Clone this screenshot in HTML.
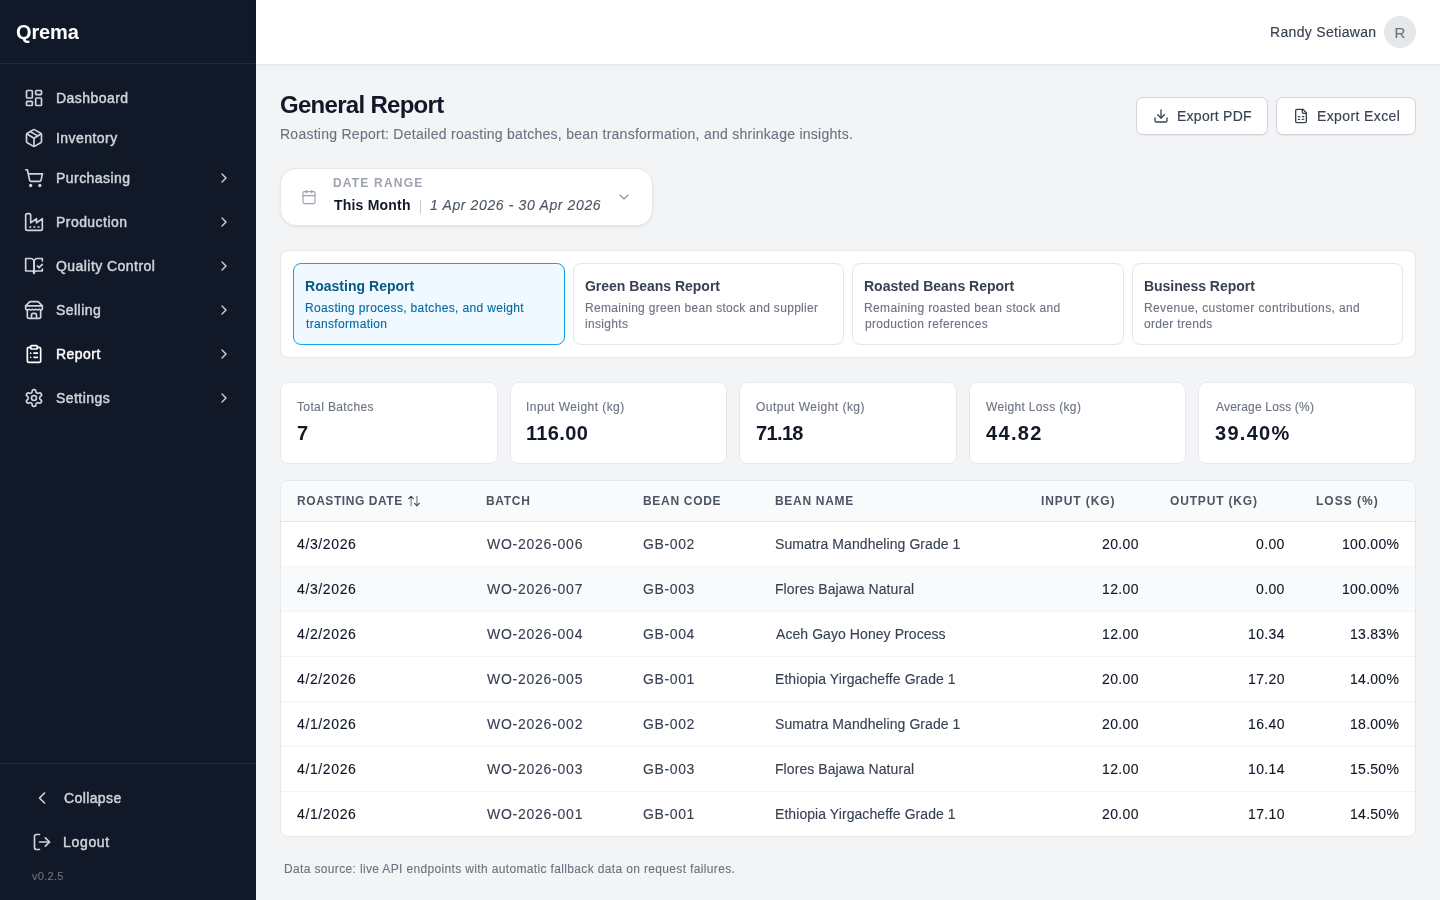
<!DOCTYPE html>
<html><head><meta charset="utf-8"><title>General Report</title>
<style>
*{box-sizing:border-box;margin:0;padding:0}
html,body{width:1440px;height:900px;overflow:hidden}
body{font-family:"Liberation Sans",sans-serif;background:#f3f4f6;position:relative;transform:translateZ(0)}
.box{position:absolute}
.t{position:absolute;white-space:nowrap;will-change:transform}
.i{position:absolute;overflow:visible}
</style></head><body>
<div class="box" style="left:0;top:0;width:256px;height:900px;background:#111827"></div>
<div class="box" style="left:0;top:63px;width:256px;height:1px;background:#1f2937"></div>
<div class="box" style="left:0;top:763px;width:256px;height:1px;background:#1f2937"></div>
<div class="t" style="top:17px;left:16px;font-size:20px;line-height:30px;color:#ffffff;font-weight:700;letter-spacing:-0.113px;">Qrema</div>
<svg class="i" style="left:24px;top:88px;width:20px;height:20px;color:#d1d5db;" viewBox="0 0 24 24" fill="none" stroke="currentColor" stroke-width="2" stroke-linecap="round" stroke-linejoin="round"><rect width="7" height="9" x="3" y="3" rx="1"/><rect width="7" height="5" x="14" y="3" rx="1"/><rect width="7" height="9" x="14" y="12" rx="1"/><rect width="7" height="5" x="3" y="16" rx="1"/></svg>
<div class="t" style="top:88px;left:56px;font-size:14px;line-height:21px;color:#d1d5db;letter-spacing:0.450px;-webkit-text-stroke:0.45px #d1d5db;">Dashboard</div>
<svg class="i" style="left:24px;top:128px;width:20px;height:20px;color:#d1d5db;" viewBox="0 0 24 24" fill="none" stroke="currentColor" stroke-width="2" stroke-linecap="round" stroke-linejoin="round"><path d="M11 21.73a2 2 0 0 0 2 0l7-4A2 2 0 0 0 21 16V8a2 2 0 0 0-1-1.73l-7-4a2 2 0 0 0-2 0l-7 4A2 2 0 0 0 3 8v8a2 2 0 0 0 1 1.73z"/><path d="M12 22V12"/><path d="m3.3 7 7.703 4.734a2 2 0 0 0 1.994 0L20.7 7"/><path d="m7.5 4.27 9 5.15"/></svg>
<div class="t" style="top:128px;left:56px;font-size:14px;line-height:21px;color:#d1d5db;letter-spacing:0.450px;-webkit-text-stroke:0.45px #d1d5db;">Inventory</div>
<svg class="i" style="left:24px;top:168px;width:20px;height:20px;color:#d1d5db;" viewBox="0 0 24 24" fill="none" stroke="currentColor" stroke-width="2" stroke-linecap="round" stroke-linejoin="round"><circle cx="8" cy="21" r="1"/><circle cx="19" cy="21" r="1"/><path d="M2.05 2.05h2l2.66 12.42a2 2 0 0 0 2 1.58h9.78a2 2 0 0 0 1.95-1.57l1.65-7.43H5.12"/></svg>
<div class="t" style="top:168px;left:56px;font-size:14px;line-height:21px;color:#d1d5db;letter-spacing:0.450px;-webkit-text-stroke:0.45px #d1d5db;">Purchasing</div>
<svg class="i" style="left:216px;top:170px;width:16px;height:16px;color:#d1d5db;" viewBox="0 0 24 24" fill="none" stroke="currentColor" stroke-width="2" stroke-linecap="round" stroke-linejoin="round"><path d="m9 18 6-6-6-6"/></svg>
<svg class="i" style="left:24px;top:212px;width:20px;height:20px;color:#d1d5db;" viewBox="0 0 24 24" fill="none" stroke="currentColor" stroke-width="2" stroke-linecap="round" stroke-linejoin="round"><path d="M2 20a2 2 0 0 0 2 2h16a2 2 0 0 0 2-2V8l-7 5V8l-7 5V4a2 2 0 0 0-2-2H4a2 2 0 0 0-2 2Z"/><path d="M17 18h1"/><path d="M12 18h1"/><path d="M7 18h1"/></svg>
<div class="t" style="top:212px;left:56px;font-size:14px;line-height:21px;color:#d1d5db;letter-spacing:0.450px;-webkit-text-stroke:0.45px #d1d5db;">Production</div>
<svg class="i" style="left:216px;top:214px;width:16px;height:16px;color:#d1d5db;" viewBox="0 0 24 24" fill="none" stroke="currentColor" stroke-width="2" stroke-linecap="round" stroke-linejoin="round"><path d="m9 18 6-6-6-6"/></svg>
<svg class="i" style="left:24px;top:256px;width:20px;height:20px;color:#d1d5db;" viewBox="0 0 24 24" fill="none" stroke="currentColor" stroke-width="2" stroke-linecap="round" stroke-linejoin="round"><path d="M8 3H2v15h7c1.7 0 3 1.3 3 3V7c0-2.2-1.8-4-4-4Z"/><path d="m16 12 2 2 4-4"/><path d="M22 6V3h-6c-2.2 0-4 1.8-4 4v14c0-1.7 1.3-3 3-3h7v-2.3"/></svg>
<div class="t" style="top:256px;left:56px;font-size:14px;line-height:21px;color:#d1d5db;letter-spacing:0.450px;-webkit-text-stroke:0.45px #d1d5db;">Quality Control</div>
<svg class="i" style="left:216px;top:258px;width:16px;height:16px;color:#d1d5db;" viewBox="0 0 24 24" fill="none" stroke="currentColor" stroke-width="2" stroke-linecap="round" stroke-linejoin="round"><path d="m9 18 6-6-6-6"/></svg>
<svg class="i" style="left:24px;top:300px;width:20px;height:20px;color:#d1d5db;" viewBox="0 0 24 24" fill="none" stroke="currentColor" stroke-width="2" stroke-linecap="round" stroke-linejoin="round"><path d="m2 7 4.41-4.41A2 2 0 0 1 7.83 2h8.34a2 2 0 0 1 1.42.59L22 7"/><path d="M4 12v8a2 2 0 0 0 2 2h12a2 2 0 0 0 2-2v-8"/><path d="M15 22v-4a2 2 0 0 0-2-2h-2a2 2 0 0 0-2 2v4"/><path d="M2 7h20"/><path d="M22 7v3a2 2 0 0 1-2 2a2.7 2.7 0 0 1-1.59-.63.7.7 0 0 0-.82 0A2.7 2.7 0 0 1 16 12a2.7 2.7 0 0 1-1.59-.63.7.7 0 0 0-.82 0A2.7 2.7 0 0 1 12 12a2.7 2.7 0 0 1-1.59-.63.7.7 0 0 0-.82 0A2.7 2.7 0 0 1 8 12a2.7 2.7 0 0 1-1.59-.63.7.7 0 0 0-.82 0A2.7 2.7 0 0 1 4 12a2 2 0 0 1-2-2V7"/></svg>
<div class="t" style="top:300px;left:56px;font-size:14px;line-height:21px;color:#d1d5db;letter-spacing:0.450px;-webkit-text-stroke:0.45px #d1d5db;">Selling</div>
<svg class="i" style="left:216px;top:302px;width:16px;height:16px;color:#d1d5db;" viewBox="0 0 24 24" fill="none" stroke="currentColor" stroke-width="2" stroke-linecap="round" stroke-linejoin="round"><path d="m9 18 6-6-6-6"/></svg>
<svg class="i" style="left:24px;top:344px;width:20px;height:20px;color:#ffffff;" viewBox="0 0 24 24" fill="none" stroke="currentColor" stroke-width="2" stroke-linecap="round" stroke-linejoin="round"><rect width="8" height="4" x="8" y="2" rx="1" ry="1"/><path d="M16 4h2a2 2 0 0 1 2 2v14a2 2 0 0 1-2 2H6a2 2 0 0 1-2-2V6a2 2 0 0 1 2-2h2"/><path d="M12 11h4"/><path d="M12 16h4"/><path d="M8 11h.01"/><path d="M8 16h.01"/></svg>
<div class="t" style="top:344px;left:56px;font-size:14px;line-height:21px;color:#ffffff;letter-spacing:0.450px;-webkit-text-stroke:0.45px #ffffff;">Report</div>
<svg class="i" style="left:216px;top:346px;width:16px;height:16px;color:#d1d5db;" viewBox="0 0 24 24" fill="none" stroke="currentColor" stroke-width="2" stroke-linecap="round" stroke-linejoin="round"><path d="m9 18 6-6-6-6"/></svg>
<svg class="i" style="left:24px;top:388px;width:20px;height:20px;color:#d1d5db;" viewBox="0 0 24 24" fill="none" stroke="currentColor" stroke-width="2" stroke-linecap="round" stroke-linejoin="round"><path d="M12.22 2h-.44a2 2 0 0 0-2 2v.18a2 2 0 0 1-1 1.73l-.43.25a2 2 0 0 1-2 0l-.15-.08a2 2 0 0 0-2.73.73l-.22.38a2 2 0 0 0 .73 2.73l.15.1a2 2 0 0 1 1 1.72v.51a2 2 0 0 1-1 1.74l-.15.09a2 2 0 0 0-.73 2.73l.22.38a2 2 0 0 0 2.73.73l.15-.08a2 2 0 0 1 2 0l.43.25a2 2 0 0 1 1 1.73V20a2 2 0 0 0 2 2h.44a2 2 0 0 0 2-2v-.18a2 2 0 0 1 1-1.730l.43-.25a2 2 0 0 1 2 0l.15.08a2 2 0 0 0 2.73-.73l.22-.39a2 2 0 0 0-.73-2.73l-.15-.08a2 2 0 0 1-1-1.74v-.5a2 2 0 0 1 1-1.74l.15-.09a2 2 0 0 0 .73-2.73l-.22-.38a2 2 0 0 0-2.73-.73l-.15.08a2 2 0 0 1-2 0l-.43-.25a2 2 0 0 1-1-1.73V4a2 2 0 0 0-2-2z"/><circle cx="12" cy="12" r="3"/></svg>
<div class="t" style="top:388px;left:56px;font-size:14px;line-height:21px;color:#d1d5db;letter-spacing:0.450px;-webkit-text-stroke:0.45px #d1d5db;">Settings</div>
<svg class="i" style="left:216px;top:390px;width:16px;height:16px;color:#d1d5db;" viewBox="0 0 24 24" fill="none" stroke="currentColor" stroke-width="2" stroke-linecap="round" stroke-linejoin="round"><path d="m9 18 6-6-6-6"/></svg>
<svg class="i" style="left:32px;top:788px;width:20px;height:20px;color:#d1d5db;" viewBox="0 0 24 24" fill="none" stroke="currentColor" stroke-width="2" stroke-linecap="round" stroke-linejoin="round"><path d="m15 18-6-6 6-6"/></svg>
<div class="t" style="top:788px;left:64px;font-size:14px;line-height:21px;color:#d1d5db;letter-spacing:0.384px;-webkit-text-stroke:0.45px #d1d5db;">Collapse</div>
<svg class="i" style="left:32px;top:831.8px;width:20px;height:20px;color:#d1d5db;" viewBox="0 0 24 24" fill="none" stroke="currentColor" stroke-width="2" stroke-linecap="round" stroke-linejoin="round"><path d="M9 21H5a2 2 0 0 1-2-2V5a2 2 0 0 1 2-2h4"/><polyline points="16 17 21 12 16 7"/><line x1="21" x2="9" y1="12" y2="12"/></svg>
<div class="t" style="top:832px;left:63px;font-size:14px;line-height:21px;color:#d1d5db;letter-spacing:0.674px;-webkit-text-stroke:0.45px #d1d5db;">Logout</div>
<div class="t" style="top:868px;left:32px;font-size:11px;line-height:16px;color:#6b7280;letter-spacing:0.278px;-webkit-text-stroke:0.12px #6b7280;">v0.2.5</div>
<div class="box" style="left:256px;top:0;width:1184px;height:65px;background:#fff;border-bottom:1px solid #e5e7eb;box-shadow:0 1px 2px rgba(0,0,0,0.04)"></div>
<div class="t" style="top:22px;left:1270px;font-size:14px;line-height:21px;color:#374151;letter-spacing:0.318px;-webkit-text-stroke:0.15px #374151;">Randy Setiawan</div>
<div class="box" style="left:1384px;top:16px;width:32px;height:32px;border-radius:50%;background:#e5e7eb"></div>
<div class="t" style="top:21.5px;font-size:15px;line-height:22px;color:#6b7280;-webkit-text-stroke:0.12px #6b7280;left:1384px;width:32px;text-align:center;">R</div>
<div class="t" style="top:87px;left:280px;font-size:24px;line-height:36px;color:#111827;font-weight:700;letter-spacing:-0.708px;">General Report</div>
<div class="t" style="top:124px;left:280px;font-size:14px;line-height:21px;color:#6b7280;letter-spacing:0.260px;-webkit-text-stroke:0.12px #6b7280;">Roasting Report: Detailed roasting batches, bean transformation, and shrinkage insights.</div>
<div class="box" style="left:1136px;top:97px;width:132px;height:38px;background:#fff;border:1px solid #d1d5db;border-radius:7px;box-shadow:0 1px 2px rgba(0,0,0,0.06)"></div>
<svg class="i" style="left:1152.8px;top:108.3px;width:16px;height:16px;color:#374151;" viewBox="0 0 24 24" fill="none" stroke="currentColor" stroke-width="2" stroke-linecap="round" stroke-linejoin="round"><path d="M21 15v4a2 2 0 0 1-2 2H5a2 2 0 0 1-2-2v-4"/><polyline points="7 10 12 15 17 10"/><line x1="12" x2="12" y1="15" y2="3"/></svg>
<div class="t" style="top:106px;left:1177px;font-size:14px;line-height:21px;color:#374151;letter-spacing:0.253px;-webkit-text-stroke:0.15px #374151;">Export PDF</div>
<div class="box" style="left:1276px;top:97px;width:140px;height:38px;background:#fff;border:1px solid #d1d5db;border-radius:7px;box-shadow:0 1px 2px rgba(0,0,0,0.06)"></div>
<svg class="i" style="left:1292.8px;top:108.3px;width:16px;height:16px;color:#374151;" viewBox="0 0 24 24" fill="none" stroke="currentColor" stroke-width="2" stroke-linecap="round" stroke-linejoin="round"><path d="M15 2H6a2 2 0 0 0-2 2v16a2 2 0 0 0 2 2h12a2 2 0 0 0 2-2V7Z"/><path d="M14 2v4a2 2 0 0 0 2 2h4"/><path d="M8 13h2"/><path d="M14 13h2"/><path d="M8 17h2"/><path d="M14 17h2"/></svg>
<div class="t" style="top:106px;left:1317px;font-size:14px;line-height:21px;color:#374151;letter-spacing:0.391px;-webkit-text-stroke:0.15px #374151;">Export Excel</div>
<div class="box" style="left:280px;top:168px;width:372.5px;height:58px;background:#fff;border:1px solid #e5e7eb;border-radius:16px;box-shadow:0 1px 3px rgba(0,0,0,0.06),0 1px 2px rgba(0,0,0,0.03)"></div>
<svg class="i" style="left:301px;top:188.6px;width:16px;height:16px;color:#9ca3af;" viewBox="0 0 24 24" fill="none" stroke="currentColor" stroke-width="1.75" stroke-linecap="round" stroke-linejoin="round"><path d="M8 2v4"/><path d="M16 2v4"/><rect width="18" height="18" x="3" y="4" rx="2"/><path d="M3 10h18"/></svg>
<div class="t" style="top:174px;left:333px;font-size:12px;line-height:18px;color:#9ca3af;font-weight:700;letter-spacing:1.199px;">DATE RANGE</div>
<div class="t" style="top:195px;left:334px;font-size:14px;line-height:21px;color:#111827;font-weight:700;letter-spacing:0.210px;">This Month</div>
<div class="box" style="left:420px;top:199.5px;width:1px;height:14px;background:#c9cdd4"></div>
<div class="t" style="top:195px;left:430px;font-size:14px;line-height:21px;color:#4b5563;font-style:italic;letter-spacing:0.629px;-webkit-text-stroke:0.12px #4b5563;">1 Apr 2026 - 30 Apr 2026</div>
<svg class="i" style="left:616px;top:189px;width:16px;height:16px;color:#8b93a1;" viewBox="0 0 24 24" fill="none" stroke="currentColor" stroke-width="1.75" stroke-linecap="round" stroke-linejoin="round"><path d="m6 9 6 6 6-6"/></svg>
<div class="box" style="left:280px;top:250px;width:1136px;height:108px;background:#fff;border:1px solid #e5e7eb;border-radius:8px"></div>
<div class="box" style="left:293.00px;top:263px;width:271.50px;height:82px;background:#f0f9ff;border:1px solid #0ea5e9;border-radius:8px"></div>
<div class="t" style="top:276px;left:305px;font-size:14px;line-height:21px;color:#075985;font-weight:700;letter-spacing:0.024px;">Roasting Report</div>
<div class="t" style="top:299px;left:305px;font-size:12px;line-height:18px;color:#0369a1;letter-spacing:0.345px;-webkit-text-stroke:0.12px #0369a1;">Roasting process, batches, and weight</div>
<div class="t" style="top:315px;left:306px;font-size:12px;line-height:18px;color:#0369a1;letter-spacing:0.330px;-webkit-text-stroke:0.12px #0369a1;">transformation</div>
<div class="box" style="left:572.50px;top:263px;width:271.50px;height:82px;background:#fff;border:1px solid #e5e7eb;border-radius:8px"></div>
<div class="t" style="top:276px;left:585px;font-size:14px;line-height:21px;color:#374151;font-weight:700;letter-spacing:-0.024px;">Green Beans Report</div>
<div class="t" style="top:299px;left:585px;font-size:12px;line-height:18px;color:#6b7280;letter-spacing:0.304px;-webkit-text-stroke:0.12px #6b7280;">Remaining green bean stock and supplier</div>
<div class="t" style="top:315px;left:585px;font-size:12px;line-height:18px;color:#6b7280;letter-spacing:0.330px;-webkit-text-stroke:0.12px #6b7280;">insights</div>
<div class="box" style="left:852.00px;top:263px;width:271.50px;height:82px;background:#fff;border:1px solid #e5e7eb;border-radius:8px"></div>
<div class="t" style="top:276px;left:864px;font-size:14px;line-height:21px;color:#374151;font-weight:700;letter-spacing:0.003px;">Roasted Beans Report</div>
<div class="t" style="top:299px;left:864px;font-size:12px;line-height:18px;color:#6b7280;letter-spacing:0.347px;-webkit-text-stroke:0.12px #6b7280;">Remaining roasted bean stock and</div>
<div class="t" style="top:315px;left:865px;font-size:12px;line-height:18px;color:#6b7280;letter-spacing:0.330px;-webkit-text-stroke:0.12px #6b7280;">production references</div>
<div class="box" style="left:1131.50px;top:263px;width:271.50px;height:82px;background:#fff;border:1px solid #e5e7eb;border-radius:8px"></div>
<div class="t" style="top:276px;left:1144px;font-size:14px;line-height:21px;color:#374151;font-weight:700;letter-spacing:-0.032px;">Business Report</div>
<div class="t" style="top:299px;left:1144px;font-size:12px;line-height:18px;color:#6b7280;letter-spacing:0.391px;-webkit-text-stroke:0.12px #6b7280;">Revenue, customer contributions, and</div>
<div class="t" style="top:315px;left:1144px;font-size:12px;line-height:18px;color:#6b7280;letter-spacing:0.330px;-webkit-text-stroke:0.12px #6b7280;">order trends</div>
<div class="box" style="left:280.00px;top:382px;width:217.60px;height:82px;background:#fff;border:1px solid #e5e7eb;border-radius:8px"></div>
<div class="t" style="top:398px;left:297px;font-size:12px;line-height:18px;color:#6b7280;letter-spacing:0.372px;-webkit-text-stroke:0.12px #6b7280;">Total Batches</div>
<div class="t" style="top:418px;left:297px;font-size:20px;line-height:30px;color:#111827;font-weight:700;">7</div>
<div class="box" style="left:509.60px;top:382px;width:217.60px;height:82px;background:#fff;border:1px solid #e5e7eb;border-radius:8px"></div>
<div class="t" style="top:398px;left:526px;font-size:12px;line-height:18px;color:#6b7280;letter-spacing:0.441px;-webkit-text-stroke:0.12px #6b7280;">Input Weight (kg)</div>
<div class="t" style="top:418px;left:526px;font-size:20px;line-height:30px;color:#111827;font-weight:700;letter-spacing:0.350px;">116.00</div>
<div class="box" style="left:739.20px;top:382px;width:217.60px;height:82px;background:#fff;border:1px solid #e5e7eb;border-radius:8px"></div>
<div class="t" style="top:398px;left:756px;font-size:12px;line-height:18px;color:#6b7280;letter-spacing:0.472px;-webkit-text-stroke:0.12px #6b7280;">Output Weight (kg)</div>
<div class="t" style="top:418px;left:756px;font-size:20px;line-height:30px;color:#111827;font-weight:700;letter-spacing:-0.640px;">71.18</div>
<div class="box" style="left:968.80px;top:382px;width:217.60px;height:82px;background:#fff;border:1px solid #e5e7eb;border-radius:8px"></div>
<div class="t" style="top:398px;left:986px;font-size:12px;line-height:18px;color:#6b7280;letter-spacing:0.338px;-webkit-text-stroke:0.12px #6b7280;">Weight Loss (kg)</div>
<div class="t" style="top:418px;left:986px;font-size:20px;line-height:30px;color:#111827;font-weight:700;letter-spacing:1.325px;">44.82</div>
<div class="box" style="left:1198.40px;top:382px;width:217.60px;height:82px;background:#fff;border:1px solid #e5e7eb;border-radius:8px"></div>
<div class="t" style="top:398px;left:1216px;font-size:12px;line-height:18px;color:#6b7280;letter-spacing:0.183px;-webkit-text-stroke:0.12px #6b7280;">Average Loss (%)</div>
<div class="t" style="top:418px;left:1215px;font-size:20px;line-height:30px;color:#111827;font-weight:700;letter-spacing:1.280px;">39.40%</div>
<div class="box" style="left:280px;top:480px;width:1136px;height:357px;background:#fff;border:1px solid #e5e7eb;border-radius:8px;overflow:hidden"><div style="position:absolute;left:0;top:0;width:100%;height:41px;background:#f9fafb;border-bottom:1px solid #e5e7eb"></div><div style="position:absolute;left:0;top:86px;width:100%;height:45px;background:#f9fafb"></div><div style="position:absolute;left:0;top:85px;width:100%;height:1px;background:#f3f4f6"></div><div style="position:absolute;left:0;top:130px;width:100%;height:1px;background:#f3f4f6"></div><div style="position:absolute;left:0;top:175px;width:100%;height:1px;background:#f3f4f6"></div><div style="position:absolute;left:0;top:220px;width:100%;height:1px;background:#f3f4f6"></div><div style="position:absolute;left:0;top:265px;width:100%;height:1px;background:#f3f4f6"></div><div style="position:absolute;left:0;top:310px;width:100%;height:1px;background:#f3f4f6"></div></div>
<div class="t" style="top:492px;left:297px;font-size:12px;line-height:18px;color:#4b5563;font-weight:700;letter-spacing:0.569px;">ROASTING DATE</div>
<div class="t" style="top:492px;left:486px;font-size:12px;line-height:18px;color:#4b5563;font-weight:700;letter-spacing:0.700px;">BATCH</div>
<div class="t" style="top:492px;left:643px;font-size:12px;line-height:18px;color:#4b5563;font-weight:700;letter-spacing:0.700px;">BEAN CODE</div>
<div class="t" style="top:492px;left:775px;font-size:12px;line-height:18px;color:#4b5563;font-weight:700;letter-spacing:0.700px;">BEAN NAME</div>
<div class="t" style="top:492px;left:1041px;font-size:12px;line-height:18px;color:#4b5563;font-weight:700;letter-spacing:0.911px;">INPUT (KG)</div>
<div class="t" style="top:492px;left:1170px;font-size:12px;line-height:18px;color:#4b5563;font-weight:700;letter-spacing:0.837px;">OUTPUT (KG)</div>
<div class="t" style="top:492px;left:1316px;font-size:12px;line-height:18px;color:#4b5563;font-weight:700;letter-spacing:1.014px;">LOSS (%)</div>
<svg class="i" style="left:407px;top:493.7px;width:14px;height:14px;color:#7b8391;" viewBox="0 0 24 24" fill="none" stroke="currentColor" stroke-width="2" stroke-linecap="round" stroke-linejoin="round"><path d="M17 20V4"/><path d="M7 4v16"/></svg>
<svg class="i" style="left:407px;top:493.7px;width:14px;height:14px;color:#374151;" viewBox="0 0 24 24" fill="none" stroke="currentColor" stroke-width="2" stroke-linecap="round" stroke-linejoin="round"><path d="m21 16-4 4-4-4"/><path d="m3 8 4-4 4 4"/></svg>
<div class="t" style="top:534px;left:297px;font-size:14px;line-height:21px;color:#111827;letter-spacing:0.620px;-webkit-text-stroke:0.12px #111827;">4/3/2026</div>
<div class="t" style="top:534px;left:487px;font-size:14px;line-height:21px;color:#374151;letter-spacing:0.750px;-webkit-text-stroke:0.12px #374151;">WO-2026-006</div>
<div class="t" style="top:534px;left:643px;font-size:14px;line-height:21px;color:#374151;letter-spacing:0.620px;-webkit-text-stroke:0.12px #374151;">GB-002</div>
<div class="t" style="top:534px;left:775px;font-size:14px;line-height:21px;color:#374151;letter-spacing:0.070px;-webkit-text-stroke:0.12px #374151;">Sumatra Mandheling Grade 1</div>
<div class="t" style="top:534px;left:1102px;font-size:14px;line-height:21px;color:#111827;letter-spacing:0.350px;-webkit-text-stroke:0.12px #111827;">20.00</div>
<div class="t" style="top:534px;left:1256px;font-size:14px;line-height:21px;color:#111827;letter-spacing:0.350px;-webkit-text-stroke:0.12px #111827;">0.00</div>
<div class="t" style="top:534px;left:1342px;font-size:14px;line-height:21px;color:#111827;letter-spacing:0.280px;-webkit-text-stroke:0.12px #111827;">100.00%</div>
<div class="t" style="top:579px;left:297px;font-size:14px;line-height:21px;color:#111827;letter-spacing:0.620px;-webkit-text-stroke:0.12px #111827;">4/3/2026</div>
<div class="t" style="top:579px;left:487px;font-size:14px;line-height:21px;color:#374151;letter-spacing:0.750px;-webkit-text-stroke:0.12px #374151;">WO-2026-007</div>
<div class="t" style="top:579px;left:643px;font-size:14px;line-height:21px;color:#374151;letter-spacing:0.620px;-webkit-text-stroke:0.12px #374151;">GB-003</div>
<div class="t" style="top:579px;left:775px;font-size:14px;line-height:21px;color:#374151;letter-spacing:0.070px;-webkit-text-stroke:0.12px #374151;">Flores Bajawa Natural</div>
<div class="t" style="top:579px;left:1102px;font-size:14px;line-height:21px;color:#111827;letter-spacing:0.350px;-webkit-text-stroke:0.12px #111827;">12.00</div>
<div class="t" style="top:579px;left:1256px;font-size:14px;line-height:21px;color:#111827;letter-spacing:0.350px;-webkit-text-stroke:0.12px #111827;">0.00</div>
<div class="t" style="top:579px;left:1342px;font-size:14px;line-height:21px;color:#111827;letter-spacing:0.280px;-webkit-text-stroke:0.12px #111827;">100.00%</div>
<div class="t" style="top:624px;left:297px;font-size:14px;line-height:21px;color:#111827;letter-spacing:0.620px;-webkit-text-stroke:0.12px #111827;">4/2/2026</div>
<div class="t" style="top:624px;left:487px;font-size:14px;line-height:21px;color:#374151;letter-spacing:0.750px;-webkit-text-stroke:0.12px #374151;">WO-2026-004</div>
<div class="t" style="top:624px;left:643px;font-size:14px;line-height:21px;color:#374151;letter-spacing:0.620px;-webkit-text-stroke:0.12px #374151;">GB-004</div>
<div class="t" style="top:624px;left:776px;font-size:14px;line-height:21px;color:#374151;letter-spacing:0.070px;-webkit-text-stroke:0.12px #374151;">Aceh Gayo Honey Process</div>
<div class="t" style="top:624px;left:1102px;font-size:14px;line-height:21px;color:#111827;letter-spacing:0.350px;-webkit-text-stroke:0.12px #111827;">12.00</div>
<div class="t" style="top:624px;left:1248px;font-size:14px;line-height:21px;color:#111827;letter-spacing:0.350px;-webkit-text-stroke:0.12px #111827;">10.34</div>
<div class="t" style="top:624px;left:1350px;font-size:14px;line-height:21px;color:#111827;letter-spacing:0.280px;-webkit-text-stroke:0.12px #111827;">13.83%</div>
<div class="t" style="top:669px;left:297px;font-size:14px;line-height:21px;color:#111827;letter-spacing:0.620px;-webkit-text-stroke:0.12px #111827;">4/2/2026</div>
<div class="t" style="top:669px;left:487px;font-size:14px;line-height:21px;color:#374151;letter-spacing:0.750px;-webkit-text-stroke:0.12px #374151;">WO-2026-005</div>
<div class="t" style="top:669px;left:643px;font-size:14px;line-height:21px;color:#374151;letter-spacing:0.620px;-webkit-text-stroke:0.12px #374151;">GB-001</div>
<div class="t" style="top:669px;left:775px;font-size:14px;line-height:21px;color:#374151;letter-spacing:0.070px;-webkit-text-stroke:0.12px #374151;">Ethiopia Yirgacheffe Grade 1</div>
<div class="t" style="top:669px;left:1102px;font-size:14px;line-height:21px;color:#111827;letter-spacing:0.350px;-webkit-text-stroke:0.12px #111827;">20.00</div>
<div class="t" style="top:669px;left:1248px;font-size:14px;line-height:21px;color:#111827;letter-spacing:0.350px;-webkit-text-stroke:0.12px #111827;">17.20</div>
<div class="t" style="top:669px;left:1350px;font-size:14px;line-height:21px;color:#111827;letter-spacing:0.280px;-webkit-text-stroke:0.12px #111827;">14.00%</div>
<div class="t" style="top:714px;left:297px;font-size:14px;line-height:21px;color:#111827;letter-spacing:0.620px;-webkit-text-stroke:0.12px #111827;">4/1/2026</div>
<div class="t" style="top:714px;left:487px;font-size:14px;line-height:21px;color:#374151;letter-spacing:0.750px;-webkit-text-stroke:0.12px #374151;">WO-2026-002</div>
<div class="t" style="top:714px;left:643px;font-size:14px;line-height:21px;color:#374151;letter-spacing:0.620px;-webkit-text-stroke:0.12px #374151;">GB-002</div>
<div class="t" style="top:714px;left:775px;font-size:14px;line-height:21px;color:#374151;letter-spacing:0.070px;-webkit-text-stroke:0.12px #374151;">Sumatra Mandheling Grade 1</div>
<div class="t" style="top:714px;left:1102px;font-size:14px;line-height:21px;color:#111827;letter-spacing:0.350px;-webkit-text-stroke:0.12px #111827;">20.00</div>
<div class="t" style="top:714px;left:1248px;font-size:14px;line-height:21px;color:#111827;letter-spacing:0.350px;-webkit-text-stroke:0.12px #111827;">16.40</div>
<div class="t" style="top:714px;left:1350px;font-size:14px;line-height:21px;color:#111827;letter-spacing:0.280px;-webkit-text-stroke:0.12px #111827;">18.00%</div>
<div class="t" style="top:759px;left:297px;font-size:14px;line-height:21px;color:#111827;letter-spacing:0.620px;-webkit-text-stroke:0.12px #111827;">4/1/2026</div>
<div class="t" style="top:759px;left:487px;font-size:14px;line-height:21px;color:#374151;letter-spacing:0.750px;-webkit-text-stroke:0.12px #374151;">WO-2026-003</div>
<div class="t" style="top:759px;left:643px;font-size:14px;line-height:21px;color:#374151;letter-spacing:0.620px;-webkit-text-stroke:0.12px #374151;">GB-003</div>
<div class="t" style="top:759px;left:775px;font-size:14px;line-height:21px;color:#374151;letter-spacing:0.070px;-webkit-text-stroke:0.12px #374151;">Flores Bajawa Natural</div>
<div class="t" style="top:759px;left:1102px;font-size:14px;line-height:21px;color:#111827;letter-spacing:0.350px;-webkit-text-stroke:0.12px #111827;">12.00</div>
<div class="t" style="top:759px;left:1248px;font-size:14px;line-height:21px;color:#111827;letter-spacing:0.350px;-webkit-text-stroke:0.12px #111827;">10.14</div>
<div class="t" style="top:759px;left:1350px;font-size:14px;line-height:21px;color:#111827;letter-spacing:0.280px;-webkit-text-stroke:0.12px #111827;">15.50%</div>
<div class="t" style="top:804px;left:297px;font-size:14px;line-height:21px;color:#111827;letter-spacing:0.620px;-webkit-text-stroke:0.12px #111827;">4/1/2026</div>
<div class="t" style="top:804px;left:487px;font-size:14px;line-height:21px;color:#374151;letter-spacing:0.750px;-webkit-text-stroke:0.12px #374151;">WO-2026-001</div>
<div class="t" style="top:804px;left:643px;font-size:14px;line-height:21px;color:#374151;letter-spacing:0.620px;-webkit-text-stroke:0.12px #374151;">GB-001</div>
<div class="t" style="top:804px;left:775px;font-size:14px;line-height:21px;color:#374151;letter-spacing:0.070px;-webkit-text-stroke:0.12px #374151;">Ethiopia Yirgacheffe Grade 1</div>
<div class="t" style="top:804px;left:1102px;font-size:14px;line-height:21px;color:#111827;letter-spacing:0.350px;-webkit-text-stroke:0.12px #111827;">20.00</div>
<div class="t" style="top:804px;left:1248px;font-size:14px;line-height:21px;color:#111827;letter-spacing:0.350px;-webkit-text-stroke:0.12px #111827;">17.10</div>
<div class="t" style="top:804px;left:1350px;font-size:14px;line-height:21px;color:#111827;letter-spacing:0.280px;-webkit-text-stroke:0.12px #111827;">14.50%</div>
<div class="t" style="top:860px;left:284px;font-size:12px;line-height:18px;color:#6b7280;letter-spacing:0.350px;-webkit-text-stroke:0.12px #6b7280;">Data source: live API endpoints with automatic fallback data on request failures.</div>
</body></html>
